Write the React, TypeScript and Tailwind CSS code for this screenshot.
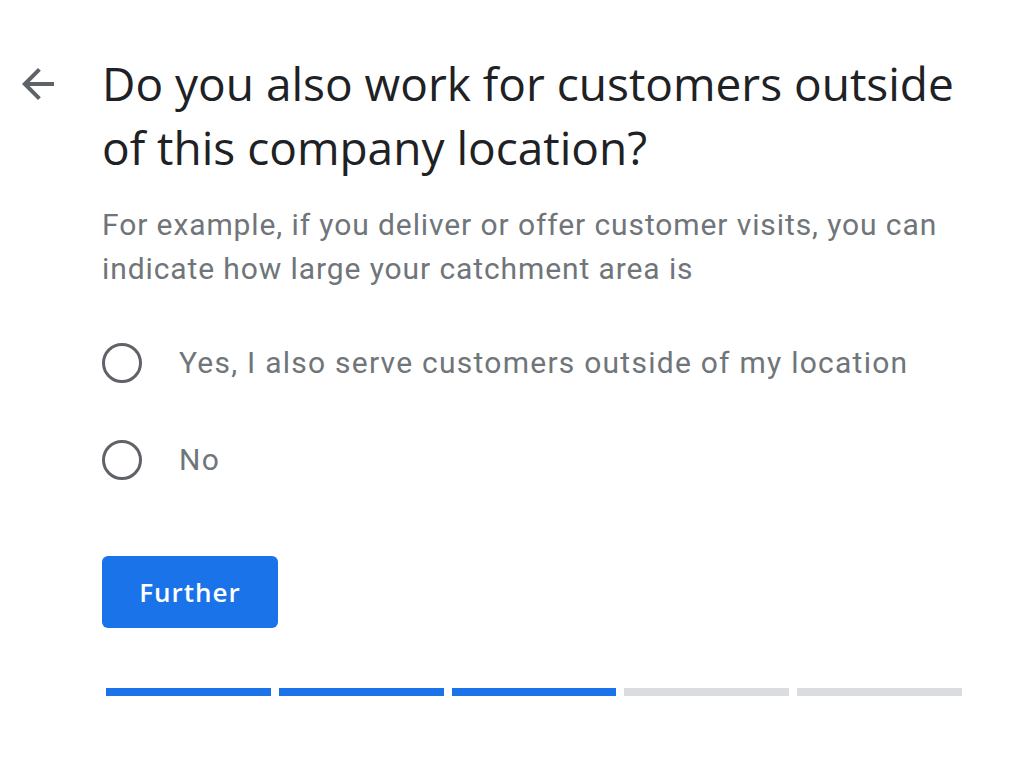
import { useState } from 'react'

const steps = [true, true, true, false, false]

function BackArrow() {
  return (
    <svg viewBox="0 0 24 24" className="h-12 w-12 fill-[#5f6368]">
      <path d="M20 11H7.83l5.59-5.59L12 4l-8 8 8 8 1.41-1.41L7.83 13H20v-2z" />
    </svg>
  )
}

function Radio({ label, checked, onClick }: { label: string; checked: boolean; onClick: () => void }) {
  return (
    <button type="button" onClick={onClick} className="flex items-center gap-[37px] text-left">
      <span className="flex h-10 w-10 shrink-0 items-center justify-center rounded-full border-[3.5px] border-[#5f6368]">
        {checked && <span className="h-5 w-5 rounded-full bg-[#1a73e8]" />}
      </span>
      <span className="text-[30px] leading-[40px] tracking-[1.25px] text-[#70757a]">{label}</span>
    </button>
  )
}

export default function App() {
  const [choice, setChoice] = useState<string | null>(null)

  return (
    <div className="min-h-[776px] bg-white font-['Roboto',sans-serif]">
      <div className="flex gap-10 pl-[14px] pt-[51px]">
        <button type="button" className="mt-[9px] h-12 w-12 shrink-0">
          <BackArrow />
        </button>
        <div className="w-[860px]">
          <h1 className="font-['Open_Sans',sans-serif] text-[46px] leading-[64px] text-[#202124]">
            Do you also work for customers outside of this company location?
          </h1>
          <p className="mt-6 text-[30px] leading-[44px] tracking-[0.9px] text-[#70757a]">
            For example, if you deliver or offer customer visits, you can indicate how large your catchment area is
          </p>
          <div className="mt-[52px] flex flex-col gap-[57px]">
            <Radio
              label="Yes, I also serve customers outside of my location"
              checked={choice === 'yes'}
              onClick={() => setChoice('yes')}
            />
            <Radio label="No" checked={choice === 'no'} onClick={() => setChoice('no')} />
          </div>
          <button
            type="button"
            className="mt-[76px] h-[72px] w-[176px] rounded-md bg-[#1a73e8] font-['Open_Sans',sans-serif] text-[26px] font-semibold tracking-[1px] text-white"
          >
            Further
          </button>
          <div className="mt-[60px] ml-1 flex w-[856px] gap-2">
            {steps.map((done, i) => (
              <div key={i} className={done ? 'h-2 flex-1 bg-[#1a73e8]' : 'h-2 flex-1 bg-[#dadce0]'} />
            ))}
          </div>
        </div>
      </div>
    </div>
  )
}
